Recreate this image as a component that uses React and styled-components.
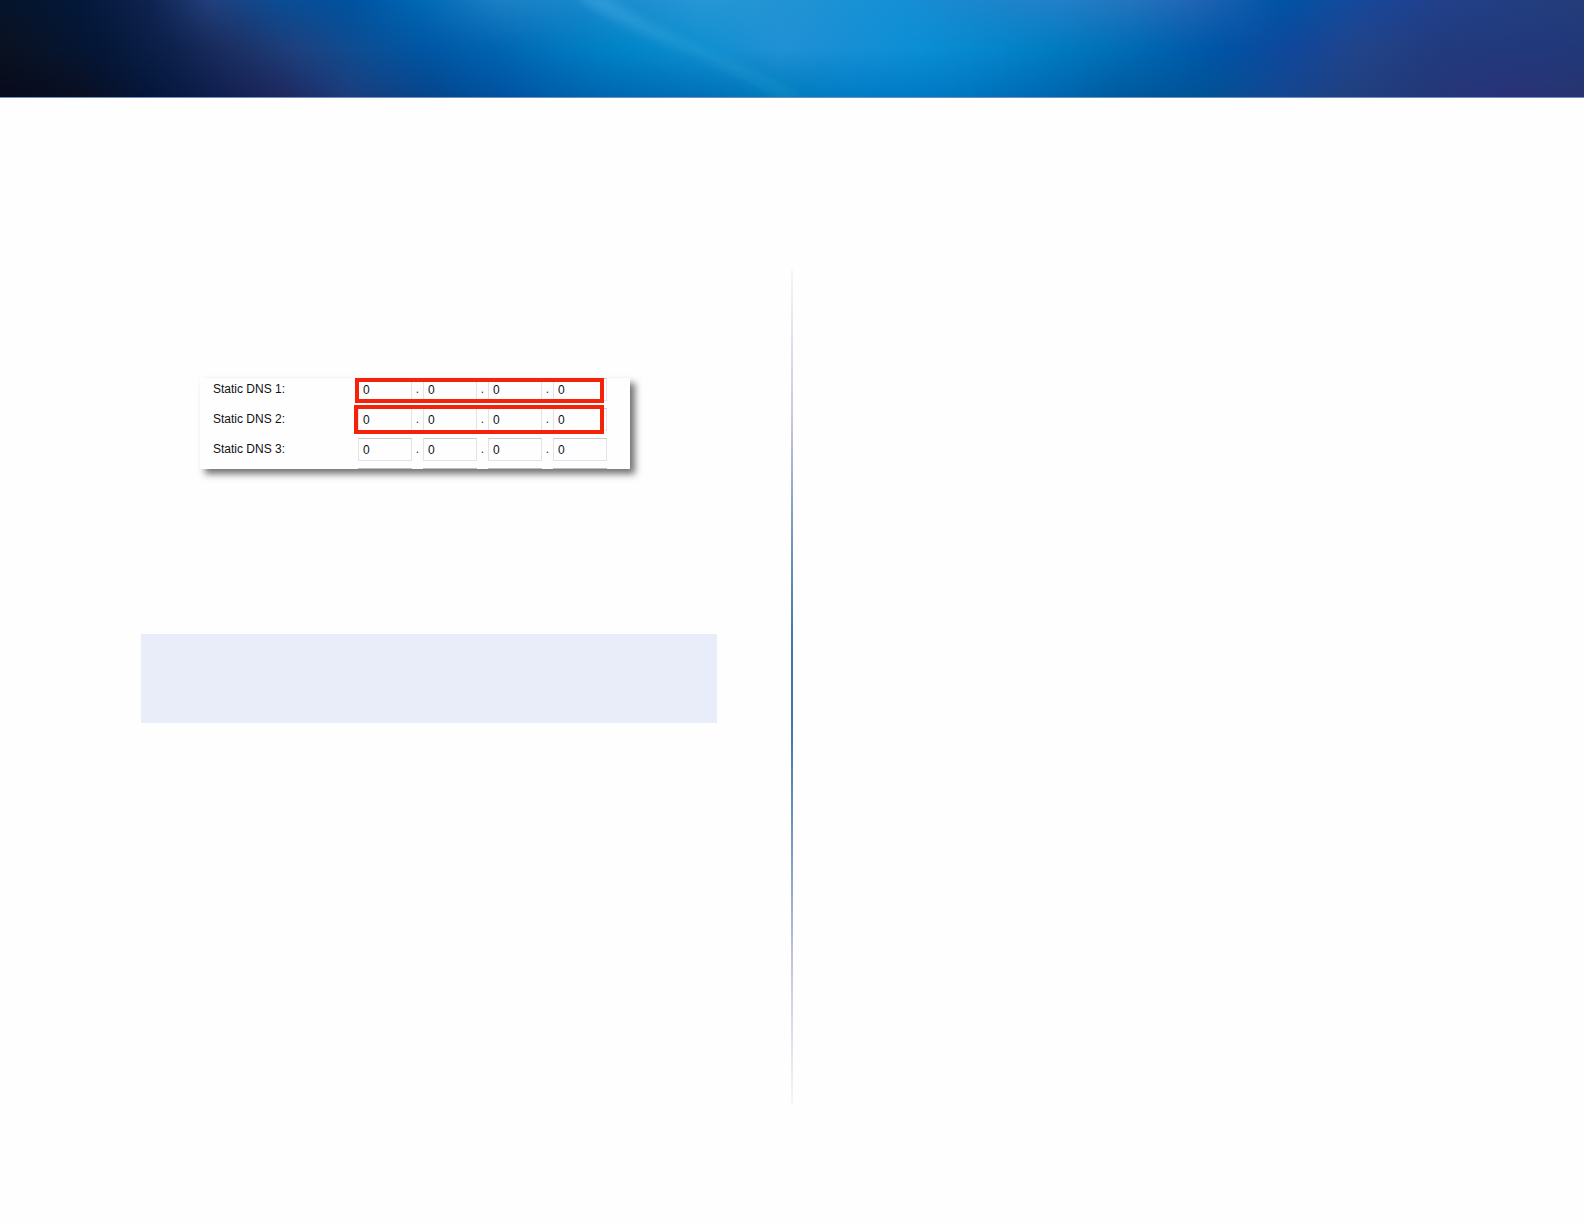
import styled, { createGlobalStyle } from "styled-components";

const GlobalStyle = createGlobalStyle`
  *,
  *::before,
  *::after {
    box-sizing: border-box;
  }

  body {
    margin: 0;
    background: #fefefe;
    font-family: "Liberation Sans", Arial, sans-serif;
  }
`;

const Page = styled.div`
  display: flex;
  flex-direction: column;
  min-height: 100vh;
`;

const Banner = styled.header`
  height: 98px;
  border-bottom: 1px solid #6f8fc0;
`;

const BannerArt = styled.svg`
  display: block;
  width: 100%;
  height: 100%;
`;

const Content = styled.main`
  flex: 1;
  display: grid;
  grid-template-columns: minmax(0, 1fr) 2px minmax(0, 1fr);
  padding: 172px 0 120px;
`;

const Column = styled.section`
  display: flex;
  flex-direction: column;
  padding: 108px 74px 0 141px;
`;

const Divider = styled.div`
  background: linear-gradient(
    #f6f6f6,
    #c9c6dc 18%,
    #7e9cc0 30%,
    #3f76a8 45%,
    #3f76ab 55%,
    #7e9cc4 70%,
    #c9c6dc 84%,
    #f6f6f6
  );
`;

const DnsPanel = styled.form`
  align-self: flex-start;
  display: flex;
  flex-direction: column;
  gap: 7px;
  margin-left: 59px;
  padding: 0 23px 0 13px;
  background: #fefefe;
  box-shadow: 5px 5px 7px rgba(0, 0, 0, 0.55);
`;

const DnsRow = styled.fieldset`
  display: flex;
  align-items: center;
  margin: 0;
  padding: 0;
  border: 0;
`;

const RowLabel = styled.label`
  width: 145px;
  color: #111;
  font-size: 12px;
  line-height: 23px;
`;

const Address = styled.div`
  position: relative;
  display: flex;
`;

const Octet = styled.input`
  width: 54px;
  height: 23px;
  padding: 1px 4px 0;
  border: 1px solid #e2e2e8;
  border-top-color: #cacad2;
  border-radius: 0;
  background: #fefefe;
  color: #111;
  font-family: inherit;
  font-size: 12px;
  outline: none;
`;

const Dot = styled.span`
  width: 11px;
  color: #333;
  font-size: 12px;
  line-height: 23px;
  text-align: center;
`;

const Highlight = styled.span`
  position: absolute;
  inset: ${({ $wide }) => ($wide ? "-3px 3px -3px -4px" : "0 3px -2px -3px")};
  border: 4px solid #f5220a;
  pointer-events: none;
`;

// top edge of the next row, cut off by the panel
const CutRow = styled.div`
  display: flex;
  gap: 11px;
  height: 1px;
  padding-left: 145px;
`;

const CutField = styled.span`
  width: 54px;
  background: #bcbcc2;
`;

const Note = styled.aside`
  height: 89px;
  margin-top: 165px;
  background: #e8edf9;
`;

const rows = [
  { id: 1, highlight: "tight" },
  { id: 2, highlight: "wide" },
  { id: 3 },
];

const octets = [0, 1, 2, 3];

const topStops = [
  [0, "#06142b"], [80, "#03183a"], [150, "#0f2350"], [210, "#22407c"],
  [280, "#0a4d94"], [350, "#00529f"], [420, "#0068b5"], [500, "#1b80c4"],
  [580, "#1787cb"], [700, "#2797d6"], [800, "#2093d3"], [900, "#158fd6"],
  [1000, "#1d84ca"], [1050, "#2181c9"], [1130, "#2275bd"], [1200, "#1f63b3"],
  [1280, "#0054a5"], [1360, "#17489a"], [1440, "#22408a"], [1584, "#243d78"],
];

const middleStops = [
  [0, "#0b1220"], [100, "#041737"], [170, "#0d214c"], [230, "#1c2f62"],
  [300, "#1d4280"], [370, "#0a5096"], [430, "#0057a5"], [500, "#0065b2"],
  [560, "#0077bf"], [620, "#0085c8"], [700, "#0f8fd0"], [780, "#2191d5"],
  [850, "#178fd5"], [920, "#0b8fd5"], [1000, "#0585cb"], [1070, "#0079be"],
  [1130, "#006bb5"], [1220, "#0054a6"], [1290, "#10479b"], [1360, "#22448a"],
  [1440, "#223b7e"], [1584, "#21387a"],
];

const bottomStops = [
  [0, "#070a1c"], [80, "#0b0f22"], [150, "#04163a"], [220, "#101f4f"],
  [280, "#1e275c"], [350, "#1c3d7c"], [430, "#05468c"], [500, "#0052a0"],
  [600, "#0066b0"], [700, "#0070b8"], [780, "#007bbb"], [850, "#007cc6"],
  [950, "#0078c2"], [1050, "#0067b2"], [1120, "#005a9f"], [1200, "#005295"],
  [1280, "#144791"], [1350, "#20407f"], [1420, "#233878"], [1500, "#2a3278"],
  [1584, "#28346f"],
];

const Sweep = ({ id, stops }) => (
  <linearGradient id={id}>
    {stops.map(([x, color]) => (
      <stop key={x} offset={x / 1584} stopColor={color} />
    ))}
  </linearGradient>
);

const BannerGlow = () => (
  <BannerArt viewBox="0 0 1584 97" preserveAspectRatio="none" aria-hidden="true">
    <defs>
      <Sweep id="top" stops={topStops} />
      <Sweep id="middle" stops={middleStops} />
      <Sweep id="bottom" stops={bottomStops} />
      <linearGradient id="fadeDown" x2="0" y2="1">
        <stop offset="0" stopColor="#fff" />
        <stop offset="0.5" stopColor="#fff" stopOpacity="0" />
      </linearGradient>
      <linearGradient id="fadeUp" x2="0" y2="1">
        <stop offset="0.5" stopColor="#fff" stopOpacity="0" />
        <stop offset="1" stopColor="#fff" />
      </linearGradient>
      <mask id="upper">
        <rect width="1584" height="97" fill="url(#fadeDown)" />
      </mask>
      <mask id="lower">
        <rect width="1584" height="97" fill="url(#fadeUp)" />
      </mask>
      <linearGradient id="ray" x1="0" y1="0" x2="1" y2="1">
        <stop offset="0" stopColor="#3fa8e0" stopOpacity="0.6" />
        <stop offset="1" stopColor="#1695cd" stopOpacity="0.3" />
      </linearGradient>
      <filter id="soft">
        <feGaussianBlur stdDeviation="4" />
      </filter>
    </defs>
    <rect width="1584" height="97" fill="url(#middle)" />
    <rect width="1584" height="97" fill="url(#top)" mask="url(#upper)" />
    <rect width="1584" height="97" fill="url(#bottom)" mask="url(#lower)" />
    <path
      d="M574 -4 L606 -4 Q650 24 700 46 Q750 68 810 97 L776 97 Q735 74 690 52 Q630 32 574 -4Z"
      fill="url(#ray)"
      filter="url(#soft)"
    />
  </BannerArt>
);

const DnsAddress = ({ id, highlight }) => (
  <DnsRow>
    <RowLabel htmlFor={`dns-${id}-0`}>Static DNS {id}:</RowLabel>
    <Address>
      {octets.map((n) => (
        <Part key={n} id={`dns-${id}-${n}`} name={`Static DNS ${id}, part ${n + 1}`} first={n === 0} />
      ))}
      {highlight && <Highlight $wide={highlight === "wide"} />}
    </Address>
  </DnsRow>
);

const Part = ({ id, name, first }) => (
  <>
    {!first && <Dot>.</Dot>}
    <Octet id={id} aria-label={first ? undefined : name} defaultValue="0" />
  </>
);

export default function App() {
  return (
    <>
      <GlobalStyle />
      <Page>
        <Banner>
          <BannerGlow />
        </Banner>
        <Content>
          <Column>
            <DnsPanel>
              {rows.map((row) => (
                <DnsAddress key={row.id} {...row} />
              ))}
              <CutRow>
                {octets.map((n) => (
                  <CutField key={n} />
                ))}
              </CutRow>
            </DnsPanel>
            <Note />
          </Column>
          <Divider />
          <Column />
        </Content>
      </Page>
    </>
  );
}
